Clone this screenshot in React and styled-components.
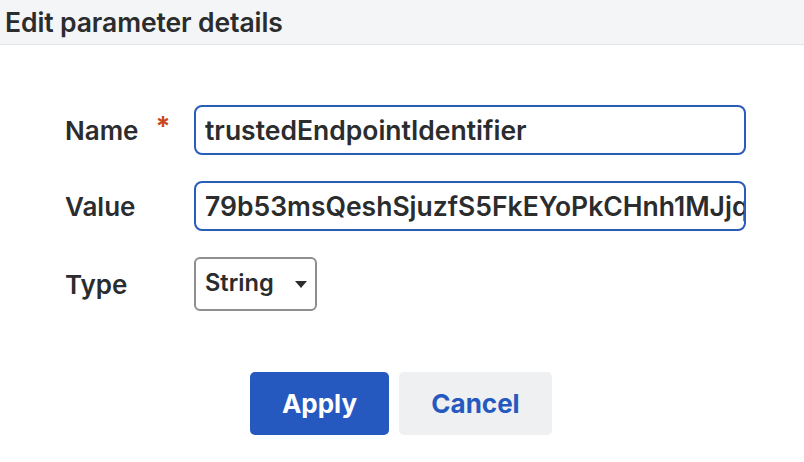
import React from "react";
import styled, { createGlobalStyle } from "styled-components";

const Global = createGlobalStyle`
  html, body { margin: 0; padding: 0; background: #ffffff; }
  body { font-family: Inter, "Noto Sans", sans-serif; color: #2b2c2e; }
  * { box-sizing: border-box; }
`;

const Page = styled.div`
  width: 804px;
  height: 462px;
  display: flex;
  flex-direction: column;
  background: #fff;
`;

const Header = styled.div`
  height: 45px;
  background: #f4f5f7;
  border-bottom: 1px solid #e3e4e6;
  display: flex;
  align-items: center;
  padding-left: 5px;
`;

const Title = styled.h1`
  margin: 0;
  font-size: 26.5px;
  font-weight: 600;
  letter-spacing: -0.1px;
  color: #2b2c2e;
`;

const Form = styled.div`
  display: grid;
  grid-template-columns: 129px 552px;
  row-gap: 26px;
  padding: 60px 0 0 65px;
  align-items: center;
`;

const Label = styled.div`
  font-size: 26px;
  font-weight: 600;
  color: #2b2c2e;
  display: flex;
  align-items: center;
`;

const Required = styled.span`
  color: #c9491f;
  margin-left: 17px;
  font-size: 27px;
  font-weight: 700;
  position: relative;
  top: -4px;
`;

const TextInput = styled.input`
  width: 552px;
  height: 50px;
  border: 2px solid #2a5cba;
  border-radius: 8px;
  padding: 0 0 0 9px;
  font-family: Inter, "Noto Sans", sans-serif;
  font-size: 26.5px;
  font-weight: 600;
  color: #2b2c2e;
  background: #fff;
  outline: none;
`;

const Select = styled.div`
  width: 123px;
  height: 54px;
  border: 2px solid #8e8e8e;
  border-radius: 6px;
  display: flex;
  align-items: center;
  justify-content: space-between;
  padding: 0 8px 3px 9px;
  font-size: 23.6px;
  font-weight: 600;
  color: #2b2c2e;

  svg {
    margin-top: 3px;
  }
`;

const Actions = styled.div`
  display: flex;
  justify-content: center;
  gap: 10px;
  margin-top: 61px;
  padding-right: 2px;
`;

const Button = styled.button`
  height: 63px;
  width: ${(p) => p.$w}px;
  border: none;
  border-radius: 5px;
  font-family: Inter, "Noto Sans", sans-serif;
  font-size: 26px;
  font-weight: 700;
  background: ${(p) => (p.$primary ? "#2559c0" : "#eff0f2")};
  color: ${(p) => (p.$primary ? "#ffffff" : "#2559c0")};
  cursor: pointer;
`;

export default function App() {
  return (
    <Page>
      <Global />
      <Header>
        <Title>Edit parameter details</Title>
      </Header>
      <Form>
        <Label>
          Name<Required>*</Required>
        </Label>
        <TextInput readOnly value="trustedEndpointIdentifier" />
        <Label>Value</Label>
        <TextInput readOnly value="79b53msQeshSjuzfS5FkEYoPkCHnh1MJjq8Xw2" />
        <Label>Type</Label>
        <div>
          <Select>
            String
            <svg width="12" height="7" viewBox="0 0 12 7">
              <path d="M0 0 H12 L6 7 Z" fill="#2b2c2e" />
            </svg>
          </Select>
        </div>
      </Form>
      <Actions>
        <Button $primary $w={139}>Apply</Button>
        <Button $w={153}>Cancel</Button>
      </Actions>
    </Page>
  );
}
